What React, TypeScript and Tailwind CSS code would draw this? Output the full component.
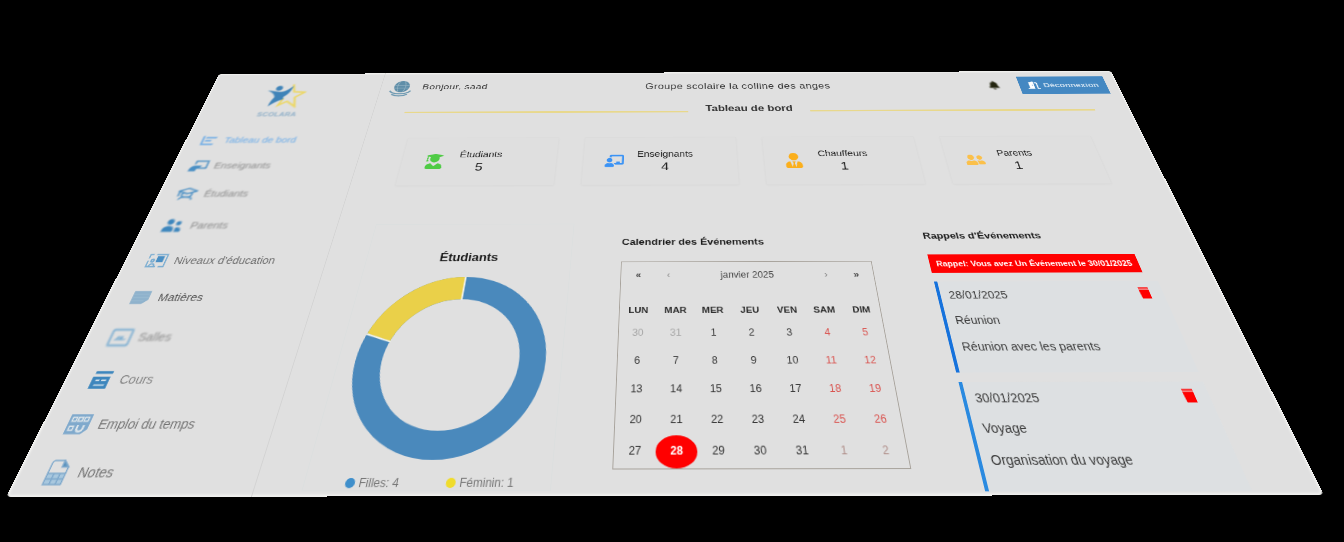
import React from "react";
import {
  FaUserGraduate,
  FaUserTie,
  FaChalkboardTeacher,
  FaUserFriends,
  FaBell,
  FaDoorOpen,
} from "react-icons/fa";

const BLUE = "#4a8fc4";

const sideIcon = "h-[26px] w-[26px] shrink-0";

function Stroke({ children }: { children: React.ReactNode }) {
  return (
    <svg viewBox="0 0 24 24" className={sideIcon} fill="none" stroke={BLUE} strokeWidth="2">
      {children}
    </svg>
  );
}

const menu = [
  {
    label: "Tableau de bord",
    row: "h-[44px] pl-[20px] gap-[9px]",
    text: "text-[#6aabe8]",
    blur: "blur-[1.2px]",
    icon: (
      <Stroke>
        <path d="M4 5v14h15M7 8h14M7 13h8" stroke="#5aa2e6" />
      </Stroke>
    ),
  },
  {
    label: "Enseignants",
    row: "h-[46px] pl-[23px] gap-[8px]",
    text: "text-[#8b8b8b]",
    blur: "blur-[1.2px]",
    icon: (
      <Stroke>
        <path d="M7 10V5h15v11h-9" />
        <path d="M2 20c0-5 3-7 6-7h6l-2 3H9v4z" fill={BLUE} />
      </Stroke>
    ),
  },
  {
    label: "Étudiants",
    row: "h-[48px] pl-[25px] gap-[10px]",
    text: "text-[#8b8b8b]",
    blur: "blur-[1.1px]",
    icon: (
      <Stroke>
        <path d="M1 8l11-4 11 4-11 4zM6 10v4c0 4 12 4 12 0v-4M4 21c1-4 4-4 8-4s7 0 8 4M2 9v7" />
      </Stroke>
    ),
  },
  {
    label: "Parents",
    row: "h-[52px] pl-[26px] gap-[10px]",
    text: "text-[#8b8b8b]",
    blur: "blur-[0.9px]",
    icon: (
      <svg viewBox="0 0 24 24" className={sideIcon} fill="#3d86bd">
        <circle cx="8" cy="7" r="4" />
        <circle cx="18" cy="9" r="3" />
        <path d="M1 21v-3c0-3 3-5 7-5s6 2 6 5v3zM16 21v-6c4-1 7 1 7 4v2z" />
      </svg>
    ),
  },
  {
    label: "Niveaux d'éducation",
    row: "h-[52px] pl-[27px] gap-[9px]",
    text: "text-[#6f6f6f]",
    blur: "blur-[0.6px]",
    icon: (
      <Stroke>
        <path d="M2 9V4h4M9 4h13v16h-6M2 12v8h11M5 20c0-5 6-5 6 0" strokeWidth="1.6" stroke="#78acd1" />
        <circle cx="7" cy="12" r="1.6" stroke="#78acd1" />
        <path d="M12 7h6v6h-6z" fill={BLUE} />
      </Stroke>
    ),
  },
  {
    label: "Matières",
    row: "h-[50px] pl-[28px] gap-[9px]",
    text: "text-[#555]",
    blur: "blur-[0.4px]",
    icon: (
      <svg viewBox="0 0 24 24" className={sideIcon} fill="#8fb2cc">
        <path d="M3 4h19v11l-6 5H3z" />
        <path d="M4 8h17M4 12h17M4 16h13" stroke="#a0bfd4" strokeWidth="0.8" />
      </svg>
    ),
  },
  {
    label: "Salles",
    row: "h-[52px] pl-[27px] gap-[8px]",
    text: "text-[#8b8b8b]",
    blur: "blur-[0.8px]",
    icon: (
      <Stroke>
        <rect x="1.5" y="3.5" width="21" height="18" rx="1" stroke="#78acd1" />
        <path d="M6 15h12M9 15v-3h3v3M14 15v-4" stroke="#78acd1" strokeWidth="1.6" />
      </Stroke>
    ),
  },
  {
    label: "Cours",
    row: "h-[50px] pl-[27px] gap-[9px]",
    text: "text-[#848484]",
    blur: "blur-[0.7px]",
    icon: (
      <svg viewBox="0 0 24 24" className={sideIcon} fill="#3d86bd">
        <path d="M4 3h18v3H4zM3 9h18v13H3z" />
        <path d="M7 13h4M13 13h5M7 18h11" stroke="#dbe6ee" strokeWidth="1.6" />
      </svg>
    ),
  },
  {
    label: "Emploi du temps",
    row: "h-[50px] pl-[26px] gap-[9px]",
    text: "text-[#747474]",
    blur: "blur-[0.7px]",
    icon: (
      <svg viewBox="0 0 24 24" className={sideIcon} fill="#7fa9cc">
        <path d="M1 2h22v15l-5 5H1z" />
        <path
          d="M4 5h4v4H4zM10 5h4v4h-4zM16 5h4v4h-4zM4 14h4v4H4z"
          fill="none"
          stroke="#dbe4ea"
          strokeWidth="1.4"
        />
        <path d="M12 13v4c1 3 5 3 6 0v-4" fill="none" stroke="#dbe4ea" strokeWidth="2" />
      </svg>
    ),
  },
  {
    label: "Notes",
    row: "h-[50px] pl-[28px] gap-[9px]",
    text: "text-[#747474]",
    blur: "blur-[0.7px]",
    icon: (
      <svg viewBox="0 0 24 24" className={sideIcon} fill="none" stroke="#7fa9cc" strokeWidth="1.4">
        <path d="M3 13V3c0-1 1-2 2-2h9l6 6v6" />
        <path d="M14 1v6h6z" fill="#5b93bd" />
        <path d="M3 13h17v10H3z" fill="#a9c8de" />
        <path d="M3 18h17M9 13v10M15 13v10" />
      </svg>
    ),
  },
];

function Logo() {
  return (
    <div className="flex h-[90px] flex-col items-center pt-[18px] pr-[25px] blur-[1.2px]">
      <svg viewBox="0 0 60 52" className="h-[54px] w-[60px]">
        <path
          d="M37 3l5 15 16 1-12 10 5 18-14-10-11 8 4-14"
          fill="none"
          stroke="#ecd765"
          strokeWidth="3"
        />
        <path
          d="M2 15l17 3c9 1 13-4 19-12-1 12-4 18-9 22l1 5c-8 3-13 8-18 14 0-9 2-14 4-18-2-7-7-10-14-14z"
          fill="#3f83b8"
        />
        <circle cx="18" cy="11" r="5" fill="#3f83b8" />
      </svg>
      <span className="mt-[2px] text-[11px] leading-[14px] font-bold tracking-wide text-[#8cadc7]">
        SCOLARA
      </span>
    </div>
  );
}

function Sidebar() {
  return (
    <aside className="h-full w-[252px] shrink-0 border-r border-[#d3d3d3]">
      <Logo />
      <nav className="mt-[17px] flex flex-col">
        {menu.map((m) => (
          <div key={m.label} className={`flex items-center ${m.row} ${m.blur}`}>
            {m.icon}
            <span className={`text-[14px] whitespace-nowrap ${m.text}`}>{m.label}</span>
          </div>
        ))}
      </nav>
    </aside>
  );
}

function Header() {
  return (
    <header className="flex h-[54px] items-center pt-[3px] pr-[17px] pl-[13px] text-[15px] text-[#333]">
      <div className="flex w-[379px] items-center gap-[15px]">
        <svg viewBox="0 0 32 32" className="mt-[6px] h-[33px] w-[33px] blur-[0.6px]">
          <circle cx="17" cy="12" r="11" fill="#5f8ea8" />
          <path
            d="M7 10h20M7 15h20M13 2c-3 6-3 14 0 20M20 2c3 6 3 14 0 20"
            stroke="#8fb0c1"
            strokeWidth="1.2"
            fill="none"
          />
          <path
            d="M1 20c2 4 8 6 15 6s13-2 15-6M5 27c6 4 16 4 22 0"
            fill="none"
            stroke="#6f9ab2"
            strokeWidth="2.4"
          />
        </svg>
        <span className="tracking-[0.4px]">Bonjour, saad</span>
      </div>
      <span className="text-[16px] tracking-[0.45px] whitespace-nowrap">
        Groupe scolaire la colline des anges
      </span>
      <div className="ml-auto flex items-center gap-[29px]">
        <FaBell className="h-[17px] w-[17px] text-[#23250f] blur-[0.8px]" />
        <button className="flex h-[35px] w-[129px] items-center justify-center gap-[6px] bg-[#4488c2] text-[13px] font-bold text-[#c9ddee]">
          <FaDoorOpen className="h-[17px] w-[18px] text-white" />
          Déconnexion
        </button>
      </div>
    </header>
  );
}

const stats = [
  { label: "Étudiants", value: 5, icon: <FaUserGraduate />, color: "text-[#4fcb45]", body: "w-[97px]", pad: "pl-[30px]" },
  { label: "Enseignants", value: 4, icon: <FaChalkboardTeacher />, color: "text-[#3b93f5]", body: "w-[112px]", pad: "pl-[28px]" },
  { label: "Chauffeurs", value: 1, icon: <FaUserTie />, color: "text-[#fbaf1c]", body: "w-[108px]", pad: "pl-[26px]" },
  { label: "Parents", value: 1, icon: <FaUserFriends />, color: "text-[#fbc04a]", body: "w-[86px]", pad: "pl-[25px]" },
];

function Stats() {
  return (
    <section className="mt-[34px] ml-[60px] grid w-[958px] grid-cols-4 gap-[36px]">
      {stats.map((s) => (
        <div
          key={s.label}
          className={`flex h-[83px] items-center border border-[#dcdcdc] bg-[#dfdfdf] shadow-[0_1px_3px_rgba(0,0,0,0.03)] ${s.pad}`}
        >
          <span className={`flex w-[28px] justify-center text-[26px] blur-[0.6px] ${s.color}`}>{s.icon}</span>
          <div className={`flex flex-col items-center text-[#222] ${s.body}`}>
            <span className="text-[14px] leading-[20px]">{s.label}</span>
            <span className="text-[19px] leading-[24px]">{s.value}</span>
          </div>
        </div>
      ))}
    </section>
  );
}

function Donut() {
  const c = 2 * Math.PI * 93;
  return (
    <section className="flex h-[325px] w-[256px] flex-col items-center border border-[#dcdfdf] pt-[38px]">
      <h2 className="shrink-0 text-[16px] leading-[22px] font-bold text-[#1a1a1a]">Étudiants</h2>
      <svg viewBox="0 0 216 216" className="mt-[16px] h-[217px] w-[217px] shrink-0">
        <g fill="none" strokeWidth="30" transform="rotate(-90 108 108)">
          <circle cx="108" cy="108" r="93" stroke="#4a89bc" />
          <circle
            cx="108"
            cy="108"
            r="93"
            stroke="#ead049"
            strokeDasharray={`${c * 0.2} ${c * 0.8}`}
            strokeDashoffset={c * 0.2}
          />
        </g>
        <path d="M108 0v31M5.3 74.6L34.8 84.2" stroke="#f3f3ea" strokeWidth="2" />
      </svg>
      <div className="mt-[11px] flex w-full shrink-0 text-[12px] leading-[24px] text-[#777]">
        <span className="flex w-[103px] items-center gap-[4px] pl-[42px]">
          <i className="h-[10px] w-[10px] rounded-full bg-[#3f8fcb]" />
          <span className="whitespace-nowrap">Filles: 4</span>
        </span>
        <span className="flex items-center gap-[4px] pl-[43px]">
          <i className="h-[10px] w-[10px] rounded-full bg-[#f0dc2c]" />
          <span className="whitespace-nowrap">Féminin: 1</span>
        </span>
      </div>
    </section>
  );
}

const weekdays = ["LUN", "MAR", "MER", "JEU", "VEN", "SAM", "DIM"];
const days = [30, 31, ...Array.from({ length: 31 }, (_, i) => i + 1), 1, 2];

function dayColor(i: number) {
  if (i === 29) return "rounded-[50%] bg-[#ff0000] font-bold text-white";
  if (i < 2) return "text-[#a8a8a8]";
  if (i > 32) return "text-[#b08f8a]";
  if (i % 7 > 4) return "text-[#d9534f]";
  return "text-[#333]";
}

function Calendar() {
  return (
    <section className="mt-[17px] ml-[62px] w-[311px]">
      <h2 className="text-[13.7px] leading-[22px] font-bold whitespace-nowrap text-[#1a1a1a]">
        Calendrier des Événements
      </h2>
      <div className="mt-[17px] h-[248px] border border-[#a8a39c]">
        <div className="flex h-[36px] items-center px-[3px] text-[12px] text-[#444]">
          <span className="w-[36px] text-center font-bold">«</span>
          <span className="w-[38px] text-center text-[#888]">‹</span>
          <span className="flex-1 text-center text-[12px]">janvier 2025</span>
          <span className="w-[38px] text-center text-[#888]">›</span>
          <span className="w-[36px] text-center font-bold">»</span>
        </div>
        <div className="mt-[16px] grid grid-cols-7 text-center text-[11.5px] leading-[26px] font-bold text-[#2a2a2a]">
          {weekdays.map((d) => (
            <span key={d}>{d}</span>
          ))}
        </div>
        <div className="grid grid-cols-7 text-center text-[12px] leading-[33.6px]">
          {days.map((d, i) => (
            <span key={i} className={dayColor(i)}>
              {d}
            </span>
          ))}
        </div>
      </div>
    </section>
  );
}

const events = [
  { date: "28/01/2025", title: "Réunion", text: "Réunion avec les parents", bar: "border-[#1672dc]" },
  { date: "30/01/2025", title: "Voyage", text: "Organisation du voyage", bar: "border-[#2a8ae0]" },
];

function Reminders() {
  return (
    <section className="mt-[9px] ml-[71px] w-[272px]">
      <h2 className="text-[13.7px] leading-[22px] font-bold whitespace-nowrap text-[#1a1a1a]">
        Rappels d'Événements
      </h2>
      <div className="mt-[16px] h-[26px] w-[258px] bg-[#ff0000] text-center text-[10.8px] leading-[26px] font-bold whitespace-nowrap text-white">
        Rappel: Vous avez Un Événement le 30/01/2025
      </div>
      <div className="mt-[12px] flex flex-col gap-[11px]">
        {events.map((e) => (
          <article
            key={e.date}
            className={`flex h-[115px] justify-between border-l-4 bg-[#dde0e2] pt-[2px] pr-[15px] pl-[10px] text-[14px] leading-[33px] text-[#3a3a3a] ${e.bar}`}
          >
            <div>
              <p>{e.date}</p>
              <p>{e.title}</p>
              <p className="whitespace-nowrap">{e.text}</p>
            </div>
            <svg viewBox="0 0 14 15" className="mt-[6px] h-[16px] w-[14px]" fill="#ff0000">
              <path d="M1 0h12v2H1zM1 3h12v12H2z" />
              <path d="M1 2h12v1H1z" fill="#ff8a8a" />
            </svg>
          </article>
        ))}
      </div>
    </section>
  );
}

export default function App() {
  return (
    <div className="h-[542px] w-[1344px] overflow-hidden bg-black font-['Liberation_Sans',Arial,sans-serif]">
      <div className="flex h-[600px] w-[1344px] origin-top-left [transform:matrix3d(0.660483,-0.0024371,0,-0.000002887,-0.358226,0.437788,0,-0.00053765,0,0,1,0,219,74,0,1)] overflow-hidden rounded-[5px] bg-[#e0e0e0] shadow-[inset_0_0_2px_2px_#f1f1ef]">
        <Sidebar />
        <main className="flex min-w-0 flex-1 flex-col">
          <Header />
          <div className="ml-[45px] flex h-[38px] w-[996px] items-center gap-[25px]">
            <i className="mt-[10px] h-[3px] flex-1 bg-[#e8d88c]" />
            <h1 className="-mt-[2px] text-[16.5px] font-bold text-[#333]">Tableau de bord</h1>
            <i className="mt-[8px] h-[3px] flex-1 bg-[#e8d88c]" />
          </div>
          <Stats />
          <div className="mt-[61px] ml-[49px] flex items-start">
            <Donut />
            <Calendar />
            <Reminders />
          </div>
        </main>
      </div>
    </div>
  );
}
